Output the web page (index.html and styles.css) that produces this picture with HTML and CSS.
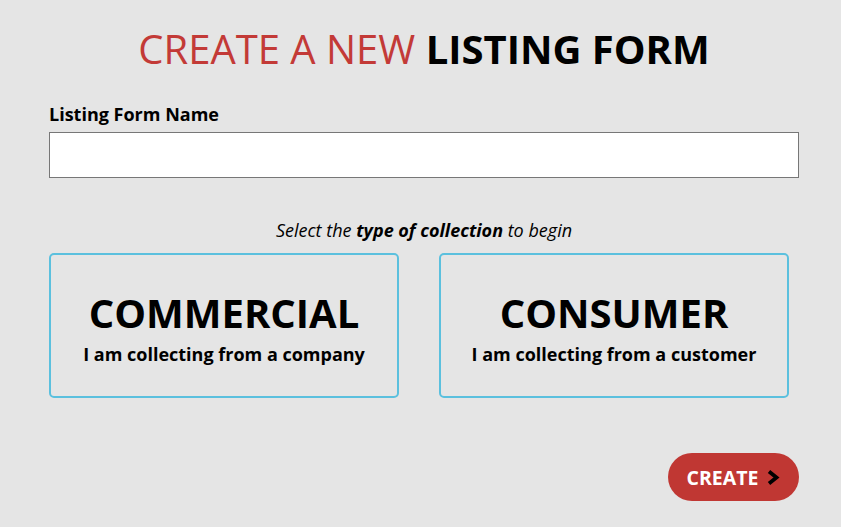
FILE: index.html
```html
<!DOCTYPE html>
<html>

<head>
  <link rel="stylesheet" href="styles.css">
</head>

<body>
  <div class="container">
    <h1><span class="light">CREATE A NEW</span> LISTING FORM</h1>

    <form class="listingForm">
      <label for="formName" class="field-label">Listing Form Name</label>
      <input type="text" id="formName" class="name-input">

      <p class="hint">Select the <b>type of collection</b> to begin</p>

      <div class="types">
        <div class="type-card">
          <span class="type-title">COMMERCIAL</span>
          <span class="type-sub">I am collecting from a company</span>
        </div>
        <div class="type-card">
          <span class="type-title">CONSUMER</span>
          <span class="type-sub">I am collecting from a customer</span>
        </div>
      </div>

      <div class="actions">
        <button type="submit" class="create-btn">CREATE
          <svg width="13" height="15" viewBox="0 0 13 15"><path d="M2 1.5 L9.5 7.5 L2 13.5" fill="none" stroke="#000" stroke-width="3.8"/></svg>
        </button>
      </div>
    </form>
  </div>
</body>

</html>
```

FILE: styles.css
```css
* {
  margin: 0;
  padding: 0;
  box-sizing: border-box;
}

body {
  background-color: #e5e5e5;
  font-family: "Open Sans", sans-serif;
  color: #000;
}

.container {
  width: 750px;
  margin-left: 49px;
  padding-top: 21px;
}

h1 {
  font-size: 40px;
  line-height: 56px;
  font-weight: 700;
  text-align: center;
}

h1 .light {
  font-weight: 400;
  color: #c33a37;
}

.listingForm {
  display: flex;
  flex-direction: column;
}

.field-label {
  margin-top: 25px;
  font-size: 18px;
  font-weight: 700;
  line-height: 24px;
}

.name-input {
  margin-top: 6px;
  width: 750px;
  height: 46px;
  border: 1px solid #777;
  background: #fff;
}

.hint {
  margin-top: 40px;
  font-size: 18px;
  font-style: italic;
  text-align: center;
  line-height: 24px;
}

.types {
  display: flex;
  gap: 40px;
  width: 740px;
  margin-top: 11px;
}

.type-card {
  flex: 1;
  height: 145px;
  border: 2px solid #5bc0de;
  border-radius: 5px;
  display: flex;
  flex-direction: column;
  align-items: center;
  justify-content: center;
  font-weight: 700;
}

.type-title {
  font-size: 40px;
  line-height: 50px;
  margin-top: 2px;
}

.type-sub {
  margin-top: 4px;
  font-size: 18px;
  line-height: 24px;
}

.actions {
  display: flex;
  justify-content: flex-end;
  margin-top: 55px;
}

.create-btn {
  width: 131px;
  height: 48px;
  border: none;
  border-radius: 24px;
  background-color: #c03733;
  color: #fff;
  font-family: "Open Sans", sans-serif;
  font-size: 19.5px;
  font-weight: 700;
  display: flex;
  align-items: center;
  justify-content: center;
  gap: 9px;
}
```
